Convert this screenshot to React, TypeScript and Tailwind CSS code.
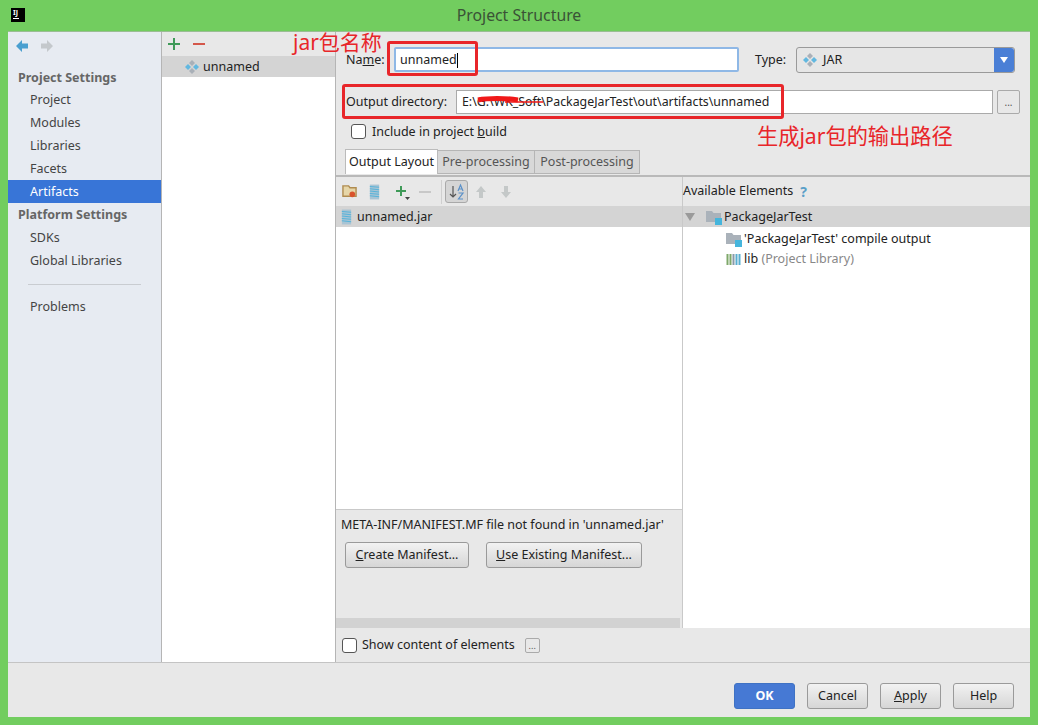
const NAV_TOP = ["Project", "Modules", "Libraries", "Facets", "Artifacts"];
const NAV_BOTTOM = ["SDKs", "Global Libraries"];

function ArtifactIcon({ className = "" }: { className?: string }) {
  return (
    <svg viewBox="0 0 16 16" className={`h-4 w-4 shrink-0 ${className}`}>
      <path d="M8 1l3 3-3 3-3-3z" fill="#a9b0b8" />
      <path d="M8 9l3 3-3 3-3-3z" fill="#a9b0b8" />
      <path d="M4 5l3 3-3 3-3-3z" fill="#62b8e0" />
      <path d="M12 5l3 3-3 3-3-3z" fill="#62b8e0" />
    </svg>
  );
}

function JarIcon() {
  return (
    <svg viewBox="0 0 14 18" className="h-[18px] w-[13px] shrink-0">
      <rect x="2" y="1" width="10" height="16" fill="#a9c4d4" />
      <path d="M2 3l10 1M2 5.500l10 1M2 8l10 1M2 10.500l10 1M2 13l10 1" stroke="#57b3d9" strokeWidth="1.100" />
    </svg>
  );
}

function ModuleFolder() {
  return (
    <svg viewBox="0 0 16 16" className="h-4 w-4 shrink-0">
      <path d="M0 2h6l1.500 2H15v9H0z" fill="#aab2ba" />
      <rect x="9" y="9" width="7" height="7" fill="#45b5dc" />
    </svg>
  );
}

function Btn({ children, className = "" }: { children: React.ReactNode; className?: string }) {
  return (
    <div className={`flex h-[26px] items-center justify-center rounded-[3px] border border-[#9a9a9a] bg-gradient-to-b from-[#f2f2f2] to-[#d6d6d6] pt-px text-[#222] ${className}`}>
      {children}
    </div>
  );
}

function Check() {
  return <div className="h-[15px] w-[15px] shrink-0 rounded-[3px] border border-[#555] bg-white" />;
}

export default function App() {
  return (
    <div
      className="relative flex h-[725px] w-[1038px] flex-col overflow-hidden bg-[#72cd5f] px-2 pb-2 text-[12.500px] text-[#222]"
      style={{ fontFamily: '"Noto Sans", "Noto Sans CJK SC", sans-serif' }}
    >
      {/* title bar */}
      <div className="relative -mx-2 flex h-[31px] shrink-0 items-center justify-center text-[15.800px] text-[#3a5236]">
        <div className="absolute left-[11px] top-[8px] flex h-[14px] w-[14px] flex-col bg-black px-[2px] pt-[1px] text-[7px] font-bold leading-[8px] text-white">
          IJ
          <div className="mt-[1px] h-px w-[6px] bg-white" />
        </div>
        Project Structure
      </div>

      <div className="flex min-h-0 flex-1 flex-col border-t border-[#9bbd94] bg-[#e8e8e8]">
        <div className="flex min-h-0 flex-1">
          {/* sidebar */}
          <div className="flex w-[153px] shrink-0 flex-col bg-[#e7ebf2] text-[#444]">
            <div className="flex h-[27px] items-center gap-[11px] pl-[7px]">
              <svg viewBox="0 0 14 14" className="h-[14px] w-[14px]">
                <path d="M7 1L1 7l6 6V9.500h6v-5H7z" fill="#4a9fd0" />
              </svg>
              <svg viewBox="0 0 14 14" className="h-[14px] w-[14px]">
                <path d="M7 1l6 6-6 6V9.500H1v-5h6z" fill="#c4c8cc" />
              </svg>
            </div>
            <div className="pl-[10px] pt-[8px] font-bold leading-[21px] text-[#666]">Project Settings</div>
            {NAV_TOP.map((item) => (
              <div
                key={item}
                className={`h-[23px] pl-[22px] leading-[23px] ${item === "Artifacts" ? "bg-[#3875d7] text-white" : ""}`}
              >
                {item}
              </div>
            ))}
            <div className="pl-[10px] pt-px font-bold leading-[22px] text-[#666]">Platform Settings</div>
            {NAV_BOTTOM.map((item) => (
              <div key={item} className="h-[23px] pl-[22px] leading-[23px]">
                {item}
              </div>
            ))}
            <div className="mx-[20px] mt-[12px] h-px bg-[#c9ccd1]" />
            <div className="mt-[10px] pl-[22px] leading-[23px]">Problems</div>
          </div>

          {/* artifact list */}
          <div className="flex w-[175px] shrink-0 flex-col border-x border-[#b5b5b5] bg-white">
            <div className="flex h-[24px] shrink-0 items-center gap-[11px] bg-[#e8e8e8] pl-[5px]">
              <svg viewBox="0 0 14 14" className="h-[14px] w-[14px]">
                <path d="M7 1v12M1 7h12" stroke="#3f9a58" strokeWidth="2" />
              </svg>
              <svg viewBox="0 0 14 14" className="h-[14px] w-[14px]">
                <path d="M1 7h12" stroke="#d4574a" strokeWidth="2" />
              </svg>
            </div>
            <div className="flex h-[21px] shrink-0 items-center gap-[3px] bg-[#d4d4d4] pl-[22px]">
              <ArtifactIcon />
              <span className="pt-px">unnamed</span>
            </div>
          </div>

          {/* details */}
          <div className="flex min-w-0 flex-1 flex-col">
            <div className="flex h-[145px] shrink-0 flex-col border-b-2 border-[#b9b9b9]">
              <div className="mt-[15px] flex h-[25px] items-center pl-[10px] pr-[15px]">
                <span className="w-[48px] pt-px">
                  Na<span className="underline">m</span>e:
                </span>
                <div className="flex h-[25px] w-[345px] items-center rounded-[2px] border-2 border-[#8fb8e6] bg-white pl-[4px] pt-px">
                  unnamed
                  <div className="h-[15px] w-px bg-black" />
                </div>
                <span className="ml-[16px] w-[41px] pt-px">Type:</span>
                <div className="flex h-[26px] flex-1 items-center rounded-[3px] border border-[#9a9a9a] bg-[#e6e6e6] pl-[5px]">
                  <ArtifactIcon />
                  <span className="ml-[5px] flex-1 pt-px">JAR</span>
                  <div className="flex h-full w-[20px] items-center justify-center rounded-r-[3px] bg-[#4a7fd6]">
                    <svg viewBox="0 0 10 8" className="h-2 w-[10px]">
                      <path d="M1 1h8L5 7z" fill="#fff" />
                    </svg>
                  </div>
                </div>
              </div>
              <div className="mt-[18px] flex h-[24px] items-center px-[10px]">
                <span className="w-[110px] shrink-0">Output directory:</span>
                <div className="flex h-[24px] flex-1 items-center border border-[#aaa] bg-white pl-[5px] text-[12.350px]">
                  E:\G:\WK_Soft\PackageJarTest\out\artifacts\unnamed
                </div>
                <div className="ml-[4px] flex h-[24px] w-[23px] items-center justify-center rounded-[2px] border border-[#aaa] text-[10px] leading-none text-[#555]">
                  ...
                </div>
              </div>
              <div className="mt-[8px] flex h-[19px] items-center gap-[6px] pl-[15px]">
                <Check />
                <span className="pt-px">
                  Include in project <span className="underline">b</span>uild
                </span>
              </div>
              <div className="mb-px mt-auto flex h-[25px] items-end pl-[9px]">
                <div className="flex h-[25px] w-[93px] items-center justify-center border border-b-0 border-[#bbb] bg-white">Output Layout</div>
                <div className="flex h-[24px] w-[97px] items-center justify-center border-y border-r border-[#b5b5b5] bg-[#d8d8d8] text-[#555]">Pre-processing</div>
                <div className="flex h-[24px] w-[105px] items-center justify-center border-y border-r border-[#b5b5b5] bg-[#d8d8d8] text-[#555]">Post-processing</div>
              </div>
            </div>

            <div className="flex min-h-0 flex-1">
              {/* output layout */}
              <div className="flex w-[347px] shrink-0 flex-col border-r border-[#c9c9c9]">
                <div className="flex h-[29px] shrink-0 items-center pl-[6px]">
                  <svg viewBox="0 0 16 16" className="h-[15px] w-[15px]">
                    <path d="M1 2h6l1.500 2H15v9H1z" fill="#e6d6a8" stroke="#b08c50" strokeWidth="1.500" />
                    <circle cx="11" cy="11" r="3" fill="#d9532c" />
                  </svg>
                  <div className="ml-[11px]"><JarIcon /></div>
                  <svg viewBox="0 0 16 16" className="ml-[13px] h-4 w-4">
                    <path d="M7 2v10M2 7h10" stroke="#3f9a58" strokeWidth="2" />
                    <path d="M11 13h5l-2.500 3z" fill="#444" />
                  </svg>
                  <svg viewBox="0 0 14 14" className="ml-[8px] h-[14px] w-[14px]">
                    <path d="M1 7h12" stroke="#c8c8c8" strokeWidth="2" />
                  </svg>
                  <div className="ml-[9px] h-[24px] w-px bg-[#cfcfcf]" />
                  <div className="ml-[3px] flex h-[23px] w-[23px] items-center justify-center rounded-[3px] border border-[#a9a9a9] bg-[#d5d5d5]">
                    <svg viewBox="0 0 18 18" className="h-[18px] w-[18px]">
                      <path d="M5 3v11M2 11l3 3 3-3" fill="none" stroke="#555" strokeWidth="1.200" />
                      <path d="M10 8l2.500-6L15 8M11 6h3" fill="none" stroke="#5a90c8" strokeWidth="1.200" />
                      <path d="M10.500 10H15l-4.500 6H15" fill="none" stroke="#5a90c8" strokeWidth="1.200" />
                    </svg>
                  </div>
                  <svg viewBox="0 0 14 14" className="ml-[6px] h-[14px] w-[14px]">
                    <path d="M7 1l5 6H9v6H5V7H2z" fill="#c4c8c8" />
                  </svg>
                  <svg viewBox="0 0 14 14" className="ml-[11px] h-[14px] w-[14px]">
                    <path d="M7 13L2 7h3V1h4v6h3z" fill="#c4c8c8" />
                  </svg>
                </div>
                <div className="flex h-[21px] shrink-0 items-center gap-[4px] bg-[#d4d4d4] pl-[4px]">
                  <JarIcon />
                  <span className="pt-px">unnamed.jar</span>
                </div>
                <div className="h-[283px] shrink-0 border-b border-[#c9c9c9] bg-white" />
                <div className="flex min-h-0 flex-1 flex-col">
                  <div className="pl-[5px] pt-[6px] leading-[18px]">META-INF/MANIFEST.MF file not found in 'unnamed.jar'</div>
                  <div className="mt-[8px] flex gap-[17px] pl-[9px]">
                    <Btn className="w-[124px]">
                      <span><span className="underline">C</span>reate Manifest...</span>
                    </Btn>
                    <Btn className="w-[156px]">
                      <span><span className="underline">U</span>se Existing Manifest...</span>
                    </Btn>
                  </div>
                  <div className="mr-[2px] mt-auto h-[10px] bg-[#d2d2d2]" />
                </div>
              </div>

              {/* available elements */}
              <div className="flex min-w-0 flex-1 flex-col">
                <div className="flex h-[29px] shrink-0 items-center gap-[7px]">
                  <span>Available Elements</span>
                  <span className="text-[14px] font-bold text-[#5a9fc8]">?</span>
                </div>
                <div className="flex h-[21px] shrink-0 items-center bg-[#d4d4d4] pl-[2px]">
                  <svg viewBox="0 0 10 8" className="h-2 w-[10px]">
                    <path d="M0 0h10L5 8z" fill="#9a9a9a" />
                  </svg>
                  <div className="ml-[11px]"><ModuleFolder /></div>
                  <span className="ml-[2px] pt-px">PackageJarTest</span>
                </div>
                <div className="flex-1 bg-white pt-[2px]">
                  <div className="flex h-[20px] items-center gap-[2px] pl-[43px]">
                    <ModuleFolder />
                    'PackageJarTest' compile output
                  </div>
                  <div className="flex h-[20px] items-center gap-[2px] pl-[43px]">
                    <svg viewBox="0 0 16 16" className="h-4 w-4 shrink-0">
                      <path d="M1.500 3v11M4.500 3v11" stroke="#7fa86a" strokeWidth="2" />
                      <path d="M7.500 3v11" stroke="#8a9aa8" strokeWidth="2" />
                      <path d="M10.500 3v11M13.500 3v11" stroke="#5aafd0" strokeWidth="2" />
                    </svg>
                    <span>
                      lib <span className="text-[#888]">(Project Library)</span>
                    </span>
                  </div>
                </div>
              </div>
            </div>

            <div className="flex h-[34px] shrink-0 items-center gap-[5px] pl-[6px]">
              <Check />
              <span className="pt-px">Show content of elements</span>
              <div className="ml-[5px] flex h-[15px] w-[15px] items-center justify-center rounded-[2px] border border-[#aaa] text-[9px] leading-none text-[#555]">
                ...
              </div>
            </div>
          </div>
        </div>

        {/* footer */}
        <div className="flex h-[55px] shrink-0 items-start justify-end gap-[12px] border-t border-[#c4c4c4] pr-[16px] pt-[20px]">
          <div className="flex h-[26px] w-[61px] items-center justify-center rounded-[3px] border border-[#3f72c4] bg-[#4679d4] pt-px font-bold text-white">OK</div>
          <Btn className="w-[61px]">Cancel</Btn>
          <Btn className="w-[61px]">
            <span><span className="underline">A</span>pply</span>
          </Btn>
          <Btn className="w-[61px]">Help</Btn>
        </div>
      </div>

      {/* red annotations drawn over the screenshot */}
      <div className="absolute left-[387px] top-[41px] h-[35px] w-[91px] rounded-[3px] border-[3px] border-[#e8262a]" />
      <div className="absolute left-[342px] top-[84px] h-[35px] w-[442px] rounded-[3px] border-[3px] border-[#e8262a]" />
      <div className="absolute left-[293px] top-[31px] text-[21px] leading-[22px] text-[#e8262a]">jar包名称</div>
      <div className="absolute left-[757px] top-[125px] text-[21.200px] leading-[22px] text-[#e8262a]">生成jar包的输出路径</div>
      <svg viewBox="0 0 70 10" className="absolute left-[475px] top-[96px] h-[10px] w-[70px]">
        <path d="M3 4c10-2 28-2 40 0" stroke="#f01818" strokeWidth="5" fill="none" />
        <path d="M30 6h38" stroke="#f01818" strokeWidth="1.500" fill="none" />
      </svg>
    </div>
  );
}
